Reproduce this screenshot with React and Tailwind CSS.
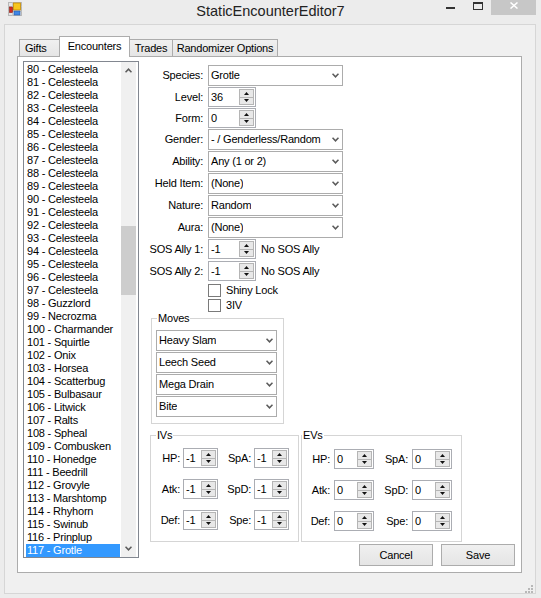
import React from 'react';

const celesteela = Array.from({ length: 18 }, (_, i) => `${80 + i} - Celesteela`);
const others = [
  'Guzzlord', 'Necrozma', 'Charmander', 'Squirtle', 'Onix', 'Horsea', 'Scatterbug',
  'Bulbasaur', 'Litwick', 'Ralts', 'Spheal', 'Combusken', 'Honedge', 'Beedrill',
  'Grovyle', 'Marshtomp', 'Rhyhorn', 'Swinub', 'Prinplup', 'Grotle',
];
const listItems = [...celesteela, ...others.map((n, i) => `${98 + i} - ${n}`)];

const comboFields = [
  ['Gender:', '- / Genderless/Random'],
  ['Ability:', 'Any (1 or 2)'],
  ['Held Item:', '(None)'],
  ['Nature:', 'Random'],
  ['Aura:', '(None)'],
];

const moves = ['Heavy Slam', 'Leech Seed', 'Mega Drain', 'Bite'];

const statRows = [
  ['HP:', 'SpA:'],
  ['Atk:', 'SpD:'],
  ['Def:', 'Spe:'],
];

const Chevron = ({ up }) => (
  <svg width="7" height="5" viewBox="0 0 7 5" className="shrink-0">
    <path
      d={up ? 'M0.5 4.3 L3.5 1.2 L6.5 4.3' : 'M0.5 0.7 L3.5 3.8 L6.5 0.7'}
      fill="none"
      stroke="#5b5b5b"
      strokeWidth="1.6"
    />
  </svg>
);

const Combo = ({ value, className }) => (
  <div className={`flex h-[21px] items-center justify-between border border-[#acacac] bg-white pl-[2px] pr-[3px] ${className}`}>
    <span className="truncate leading-[13px]">{value}</span>
    <Chevron />
  </div>
);

const SpinButtons = () => (
  <div className="my-px mr-px flex w-[15px] flex-col border border-[#b5b5b5] bg-[#e8e8e8]">
    <div className="flex flex-1 items-center justify-center border-b border-[#b5b5b5]">
      <svg width="5" height="3" viewBox="0 0 5 3">
        <path d="M0 3 L2.5 0 L5 3 Z" fill="#111" />
      </svg>
    </div>
    <div className="flex flex-1 items-center justify-center">
      <svg width="5" height="3" viewBox="0 0 5 3">
        <path d="M0 0 L2.5 3 L5 0 Z" fill="#111" />
      </svg>
    </div>
  </div>
);

const Numeric = ({ value, className }) => (
  <div className={`flex h-[20px] shrink-0 border border-[#abadb3] bg-white ${className}`}>
    <span className="flex-1 pl-[2px] leading-[18px]">{value}</span>
    <SpinButtons />
  </div>
);

const FieldRow = ({ label, className, children }) => (
  <div className={`flex items-center ${className}`}>
    <span className="w-[64px] shrink-0 whitespace-nowrap text-right leading-[13px]">{label}</span>
    <div className="ml-[5px] flex items-center">{children}</div>
  </div>
);

const CheckRow = ({ label, className }) => (
  <div className={`ml-[69px] flex h-[13px] items-center ${className}`}>
    <div className="h-[13px] w-[13px] border border-[#7a7a7a] bg-white" />
    <span className="ml-[5px] leading-[13px]">{label}</span>
  </div>
);

const Group = ({ title, legend, className, children }) => (
  <div className={`relative shrink-0 border border-[#d5d5d5] ${className}`}>
    <span className={`absolute top-[-7px] bg-white px-[1px] leading-[13px] ${legend}`}>{title}</span>
    {children}
  </div>
);

const Button = ({ children }) => (
  <div className="flex h-[22px] w-[74px] items-center justify-center border border-[#acacac] bg-linear-to-b from-[#f0f0f0] to-[#e5e5e5]">
    {children}
  </div>
);

const AppIcon = () => (
  <svg width="14" height="14" viewBox="0 0 14 14" className="ml-[8px] mt-[2px]">
    <rect x="0.5" y="0.5" width="13" height="13" fill="#e4e4e4" stroke="#b8b8b8" />
    <path d="M0.5 4.5 H13.5 M4.5 0.5 V13.5 M0.5 9.5 H13.5" stroke="#c8c8c8" />
    <rect x="1.5" y="5" width="3" height="5.5" fill="#d42a1e" stroke="#8c1a12" strokeWidth="0.6" />
    <rect x="5.5" y="1" width="7" height="7" fill="#f7c51c" stroke="#c58a00" strokeWidth="0.8" />
    <rect x="6" y="9" width="6" height="4" fill="#3f86e6" stroke="#2357a8" strokeWidth="0.6" />
  </svg>
);

const App = () => {
  return (
    <div className="flex h-[598px] w-[541px] flex-col overflow-hidden bg-[#ececec] font-['Liberation_Sans',Arial,sans-serif] text-[11px] tracking-[-0.2px] text-black">
      {/* title bar */}
      <div className="grid h-[24px] shrink-0 grid-cols-[1fr_auto_1fr]">
        <div className="flex items-start">
          <AppIcon />
        </div>
        <div className="mt-px text-[14.5px] leading-[20px] tracking-normal text-[#222]">StaticEncounterEditor7</div>
        <div className="flex items-start justify-end pr-[5px]">
          <div className="mt-[7px] h-[2px] w-[9px] bg-[#333]" />
          <div className="ml-[18px] mt-[2px] h-[8px] w-[10px] border border-t-2 border-[#333]" />
          <div className="ml-[8px] flex h-[15px] w-[45px] justify-center bg-[#c7c7c7]">
            <svg width="8" height="7" viewBox="0 0 8 7" className="mt-[2px]">
              <path d="M0.5 0.5 L7.5 6.5 M7.5 0.5 L0.5 6.5" stroke="#fff" strokeWidth="1.5" />
            </svg>
          </div>
        </div>
      </div>

      {/* client area */}
      <div className="mb-[4px] ml-[4px] mr-[5px] flex flex-1 flex-col border border-[#d6d6d6] bg-[#f0f0f0] pt-[11px]">
        {/* tabs */}
        <div className="ml-[14px] flex h-[20px] items-end">
          <div className="flex h-[17px] w-[41px] items-center border-x border-t border-[#acacac] bg-linear-to-b from-[#f0f0f0] to-[#e5e5e5] pl-[5px]">
            Gifts
          </div>
          <div className="relative z-10 -mb-px -ml-px flex h-[21px] w-[71px] items-center justify-center border-x border-t border-[#acacac] bg-white pb-[2px]">
            Encounters
          </div>
          <div className="-ml-px flex h-[17px] w-[44px] items-center justify-center border-x border-t border-[#acacac] bg-linear-to-b from-[#f0f0f0] to-[#e5e5e5]">
            Trades
          </div>
          <div className="-ml-px flex h-[17px] w-[106px] items-center justify-center border-x border-t border-[#acacac] bg-linear-to-b from-[#f0f0f0] to-[#e5e5e5]">
            Randomizer Options
          </div>
        </div>

        {/* tab page */}
        <div className="ml-[12px] flex h-[517px] w-[505px] items-start border border-[#acacac] bg-white">
          {/* encounter list */}
          <div className="ml-[5px] mt-[4px] flex h-[497px] w-[116px] shrink-0 border border-[#828790] bg-white">
            <div className="flex-1 overflow-hidden pl-[2px] pr-px pt-px">
              {listItems.map((item, i) => (
                <div
                  key={item}
                  className={`h-[13px] whitespace-nowrap pl-px leading-[13px] ${i === listItems.length - 1 ? 'bg-[#3399ff] text-white' : ''}`}
                >
                  {item}
                </div>
              ))}
            </div>
            <div className="mr-[2px] flex w-[15px] flex-col bg-[#f0f0f0]">
              <div className="flex h-[17px] items-center justify-center">
                <Chevron up />
              </div>
              <div className="flex-1">
                <div className="mt-[147px] h-[69px] bg-[#cdcdcd]" />
              </div>
              <div className="flex h-[17px] items-center justify-center">
                <Chevron />
              </div>
            </div>
          </div>

          {/* editor */}
          <div className="flex flex-1 flex-col pt-[8px]">
            <FieldRow label="Species:">
              <Combo value="Grotle" className="w-[135px]" />
            </FieldRow>
            <FieldRow label="Level:" className="mt-px">
              <Numeric value="36" className="w-[48px]" />
            </FieldRow>
            <FieldRow label="Form:" className="mt-px">
              <Numeric value="0" className="w-[48px]" />
            </FieldRow>
            {comboFields.map(([label, value]) => (
              <FieldRow key={label} label={label} className="mt-px">
                <Combo value={value} className="w-[135px]" />
              </FieldRow>
            ))}
            <FieldRow label="SOS Ally 1:" className="mt-px">
              <Numeric value="-1" className="w-[48px]" />
              <span className="ml-[5px] leading-[13px]">No SOS Ally</span>
            </FieldRow>
            <FieldRow label="SOS Ally 2:" className="mt-[2px]">
              <Numeric value="-1" className="w-[48px]" />
              <span className="ml-[5px] leading-[13px]">No SOS Ally</span>
            </FieldRow>
            <CheckRow label="Shiny Lock" className="mt-[3px]" />
            <CheckRow label="3IV" className="mt-[2px]" />

            <Group title="Moves" legend="left-[5px]" className="ml-[12px] mt-[6px] h-[106px] w-[133px]">
              <div className="flex flex-col gap-px pl-[4px] pt-[11px]">
                {moves.map((m) => (
                  <Combo key={m} value={m} className="w-[121px]" />
                ))}
              </div>
            </Group>

            <div className="ml-[11px] mt-[11px] flex gap-[2px]">
              <Group title="IVs" legend="left-[5px]" className="h-[107px] w-[149px]">
                <div className="flex flex-col gap-[11px] pt-[12px]">
                  {statRows.map(([a, b]) => (
                    <div key={a} className="flex items-center">
                      <span className="w-[29px] text-right leading-[13px]">{a}</span>
                      <Numeric value="-1" className="ml-[3px] w-[35px]" />
                      <span className="w-[33px] text-right leading-[13px]">{b}</span>
                      <Numeric value="-1" className="ml-[3px] w-[35px]" />
                    </div>
                  ))}
                </div>
              </Group>
              <Group title="EVs" legend="left-[0px]" className="h-[107px] w-[161px]">
                <div className="flex flex-col gap-[11px] pt-[13px]">
                  {statRows.map(([a, b]) => (
                    <div key={a} className="flex items-center">
                      <span className="w-[28px] text-right leading-[13px]">{a}</span>
                      <Numeric value="0" className="ml-[4px] w-[40px]" />
                      <span className="w-[34px] text-right leading-[13px]">{b}</span>
                      <Numeric value="0" className="ml-[4px] w-[40px]" />
                    </div>
                  ))}
                </div>
              </Group>
            </div>

            <div className="mt-[2px] flex justify-end gap-[8px] pr-[6px]">
              <Button>Cancel</Button>
              <Button>Save</Button>
            </div>
          </div>
        </div>

        {/* size grip */}
        <div className="mt-auto flex justify-end pr-[2px]">
          <svg width="8" height="8" viewBox="0 0 8 8">
            <rect x="6" y="0" width="2" height="2" fill="#b8b8b8" />
            <rect x="3" y="3" width="2" height="2" fill="#b8b8b8" />
            <rect x="6" y="3" width="2" height="2" fill="#b8b8b8" />
            <rect x="0" y="6" width="2" height="2" fill="#b8b8b8" />
            <rect x="3" y="6" width="2" height="2" fill="#b8b8b8" />
            <rect x="6" y="6" width="2" height="2" fill="#b8b8b8" />
          </svg>
        </div>
      </div>
    </div>
  );
};

export default App;
